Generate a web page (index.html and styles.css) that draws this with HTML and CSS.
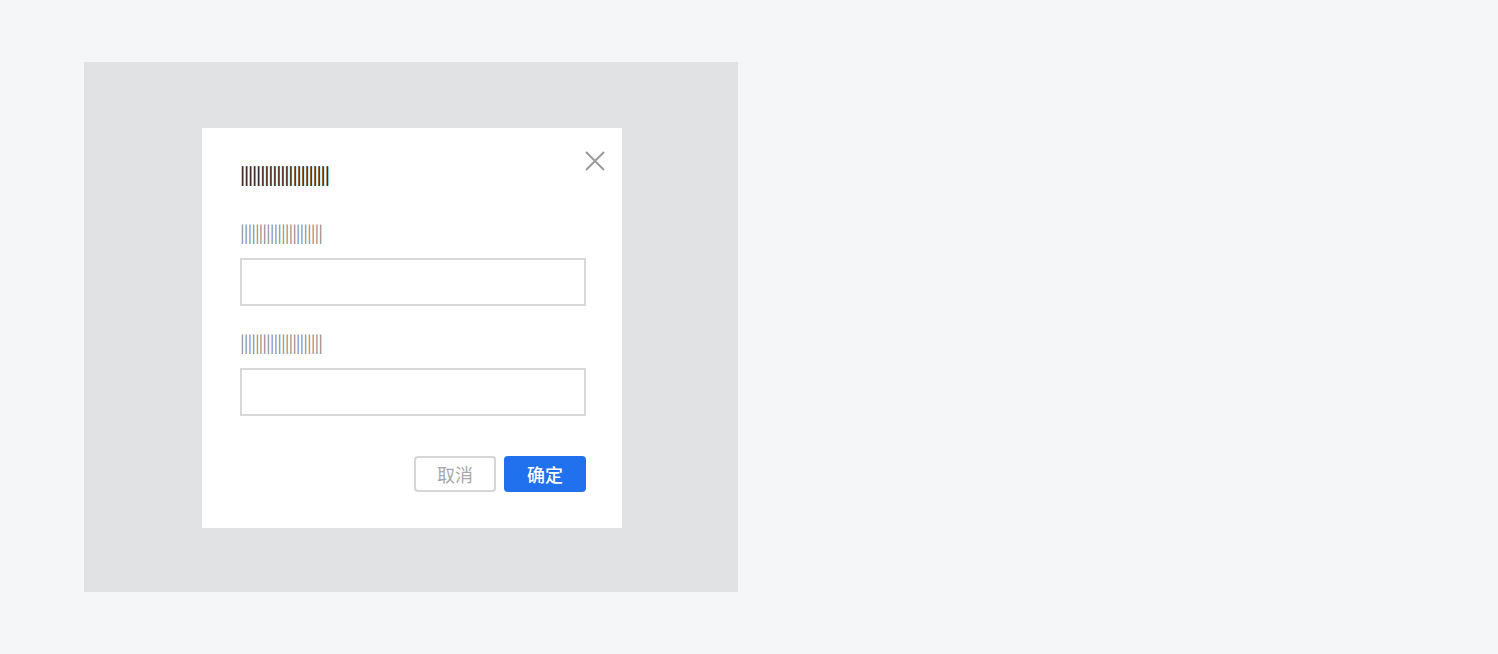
FILE: index.html
```html
<!DOCTYPE html>
<html lang="zh">
<head>
<meta charset="utf-8">
<link rel="stylesheet" href="styles.css">
</head>
<body>
<div class="stage">
  <div class="overlay">
    <div class="dialog">
      <button class="close" aria-label="close">
        <svg width="20" height="20" viewBox="0 0 20 20"><path d="M1 1 L19 19 M19 1 L1 19" stroke="#9b9b9b" stroke-width="2" fill="none"/></svg>
      </button>
      <div class="title">||||||||||||||||||||||</div>
      <div class="field">
        <div class="label">||||||||||||||||||||||</div>
        <div class="input"></div>
      </div>
      <div class="field">
        <div class="label">||||||||||||||||||||||</div>
        <div class="input"></div>
      </div>
      <div class="actions">
        <button class="btn cancel">取消</button>
        <button class="btn ok">确定</button>
      </div>
    </div>
  </div>
</div>
</body>
</html>
```
FILE: styles.css
```css
html, body {
  margin: 0;
  padding: 0;
  background: #f5f6f8;
  font-family: "Noto Sans CJK SC", "Noto Sans", sans-serif;
}
.stage {
  padding: 62px 0 0 84px;
}
.overlay {
  width: 654px;
  height: 530px;
  background: #e1e2e4;
  box-sizing: border-box;
  padding: 66px 0 0 118px;
}
.dialog {
  position: relative;
  width: 420px;
  height: 400px;
  box-sizing: border-box;
  background: #fff;
  padding: 34px 36px 0 38px;
}
.close {
  position: absolute;
  top: 23px;
  left: 383px;
  width: 20px;
  height: 20px;
  padding: 0;
  border: 0;
  background: none;
  display: block;
}
.close svg { display: block; }
.title {
  font-size: 17.5px;
  font-weight: 700;
  letter-spacing: -1.15px;
  color: #2e2e2e;
  line-height: 24px;
  height: 24px;
  white-space: nowrap;
}
.field {
  margin-top: 34px;
}
.label {
  font-size: 17.5px;
  letter-spacing: -1px;
  color: #8a8a8a;
  line-height: 24px;
  height: 24px;
  margin-bottom: 14px;
  white-space: nowrap;
}
.input {
  height: 48px;
  box-sizing: border-box;
  border: 2px solid #d8d8d8;
  background: #fff;
}
.field + .field { margin-top: 24px; }
.actions {
  display: flex;
  justify-content: flex-end;
  gap: 8px;
  margin-top: 40px;
}
.btn {
  width: 82px;
  height: 36px;
  box-sizing: border-box;
  border-radius: 4px;
  font-family: "Noto Sans CJK SC", sans-serif;
  font-size: 18px;
  line-height: 32px;
  padding: 0;
}
.cancel {
  background: #fff;
  border: 2px solid #d6d6d6;
  color: #a8a8a8;
}
.ok {
  background: #2170ee;
  border: 2px solid #2170ee;
  color: #fff;
  font-weight: 500;
}
```
